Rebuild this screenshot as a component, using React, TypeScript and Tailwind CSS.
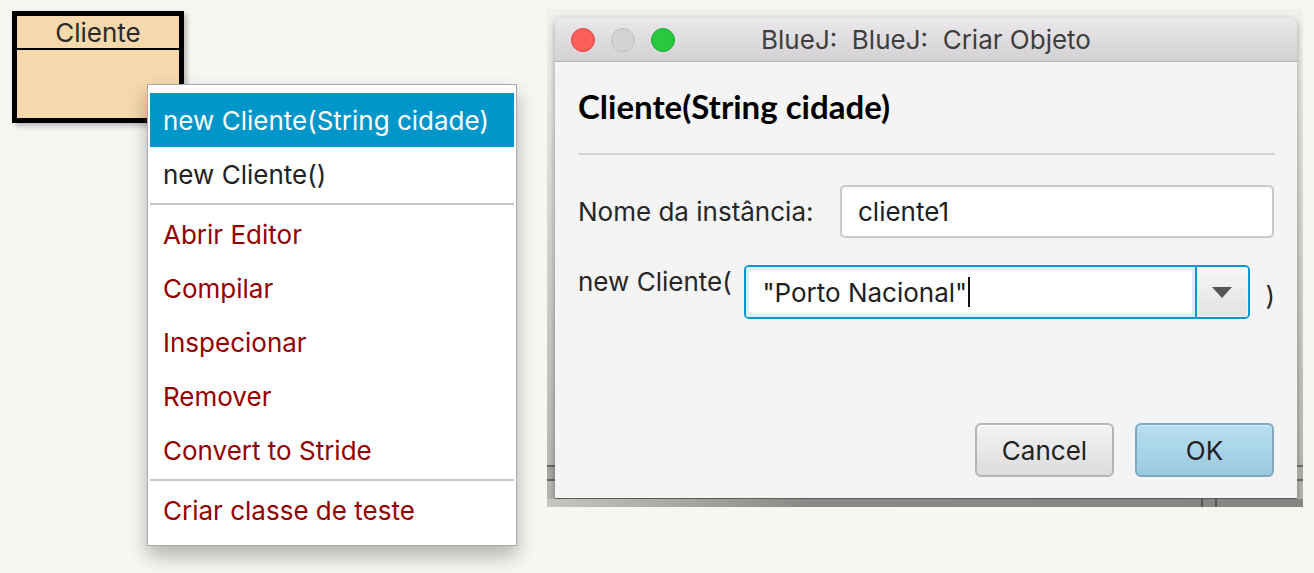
import React from "react";

const menuItems: { label: string; kind: "sel" | "normal" | "red" | "sep" }[] = [
  { label: "new Cliente(String cidade)", kind: "sel" },
  { label: "new Cliente()", kind: "normal" },
  { label: "", kind: "sep" },
  { label: "Abrir Editor", kind: "red" },
  { label: "Compilar", kind: "red" },
  { label: "Inspecionar", kind: "red" },
  { label: "Remover", kind: "red" },
  { label: "Convert to Stride", kind: "red" },
  { label: "", kind: "sep" },
  { label: "Criar classe de teste", kind: "red" },
];

function Menu() {
  return (
    <div className="absolute left-[147px] top-[84px] w-[370px] h-[462px] bg-white border border-[#a9a9a9] px-[2px] py-[8px] shadow-[0_10px_18px_rgba(0,0,0,0.28)] flex flex-col">
      {menuItems.map((it, i) =>
        it.kind === "sep" ? (
          <div key={i} className="h-[6px] flex items-center">
            <div className="h-[2px] w-full bg-[#c9c9c9]" />
          </div>
        ) : (
          <div
            key={i}
            className={
              it.kind === "sel"
                ? "h-[54px] pl-[13px] flex items-center text-[26px] text-white bg-[#0096c9]"
                : it.kind === "red"
                ? "h-[54px] pl-[13px] flex items-center text-[26px] text-[#930000]"
                : "h-[54px] pl-[13px] flex items-center text-[26px] text-[#222222]"
            }
          >
            {it.label}
          </div>
        )
      )}
    </div>
  );
}

function ClassBox() {
  return (
    <div className="ml-[12px] mt-[11px] w-[172px] h-[112px] border-[5px] border-black bg-[#f5d8ab] shadow-[3px_3px_5px_rgba(0,0,0,0.25)] flex flex-col shrink-0">
      <div className="h-[34px] pt-[2px] border-b-2 border-black flex items-center justify-center text-[26px] text-[#2a2a2a] leading-none">
        Cliente
      </div>
    </div>
  );
}

function Dialog() {
  return (
    <div className="ml-[363px] mt-[9px] w-[756px] h-[498px] shrink-0 flex flex-col bg-[linear-gradient(to_bottom,#f1f0ec,#d8d7d2_40%,#b4b3ae)]">
      <div className="flex pt-[9px]">
        {/* left strip */}
        <div className="w-[8px] h-[481px] flex flex-col">
          <div className="h-[447px]" />
          <div className="h-[2px] bg-[#666]" />
          <div className="h-[12px] bg-[#a8a7a4]" />
          <div className="h-[2px] bg-[#666]" />
        </div>
        {/* window */}
        <div className="w-[742px] h-[481px] flex flex-col rounded-t-[7px] overflow-hidden border-b border-[#5a5a5a] shadow-[0_2px_6px_rgba(0,0,0,0.35)]">
          <div className="h-[44px] shrink-0 grid grid-cols-[1fr_auto_1fr] items-center bg-[linear-gradient(to_bottom,#eae8ea,#d3d1d3)] border-b border-[#b3b1b3]">
            <div className="flex items-center gap-[16px] pl-[16px]">
              <div className="w-[24px] h-[24px] rounded-full bg-[#fc5f57] border border-[#e0443e]" />
              <div className="w-[24px] h-[24px] rounded-full bg-[#d3d3d3] border border-[#bdbdbd]" />
              <div className="w-[24px] h-[24px] rounded-full bg-[#28c840] border border-[#1eaa2d]" />
            </div>
            <div className="whitespace-pre text-[26px] text-[#3e3e3e] leading-none">BlueJ:  BlueJ:  Criar Objeto</div>
            <div />
          </div>
          <div className="flex-1 bg-[#f4f4f4] pl-[23px] pr-[22px] flex flex-col">
            <div className="mt-[26px] h-[36px] leading-[36px] text-[33px] font-bold text-black font-['Lato',sans-serif]">
              Cliente(String cidade)
            </div>
            <div className="mt-[29px] h-[2px] bg-[#d2d2d2]" />
            <div className="mt-[30px] flex items-center pr-[1px]">
              <div className="w-[262px] text-[26px] text-[#262626]">Nome da instância:</div>
              <div className="w-[434px] h-[53px] rounded-[5px] border-2 border-[#cacaca] bg-white flex items-center pl-[16px] text-[26px] text-[#1e1e1e] shadow-[inset_0_2px_2px_rgba(0,0,0,0.04)]">
                cliente1
              </div>
            </div>
            <div className="mt-[27px] flex items-start">
              <div className="w-[167px] pt-[2px] text-[26px] text-[#262626] leading-[30px]">new Cliente(</div>
              <div className="w-[507px] h-[54px] rounded-[5px] border-2 border-[#0a98cf] flex overflow-hidden">
                <div className="flex-1 flex items-center border-[3px] border-[#dbeff9] bg-white pl-[13px] text-[26px] text-[#1e1e1e]">
                  <span>"Porto Nacional"</span>
                  <span className="ml-[1px] w-[2px] h-[30px] bg-[#111]" />
                </div>
                <div className="w-[2px] bg-[#0a98cf]" />
                <div className="w-[51px] flex items-center justify-center bg-[linear-gradient(to_bottom,#f6f6f6,#e2e2e2)] border border-[#e8f4fa]">
                  <svg width="20" height="11" viewBox="0 0 20 11">
                    <path d="M0 0 L20 0 L10 11 Z" fill="#555" />
                  </svg>
                </div>
              </div>
              <div className="pl-[16px] pt-[16px] text-[26px] text-[#262626] leading-[30px]">)</div>
            </div>
            <div className="mt-[104px] flex justify-end gap-[21px] pr-[1px]">
              <div className="w-[139px] h-[54px] rounded-[6px] border-2 border-[#b5b5b5] bg-[linear-gradient(to_bottom,#f3f3f3,#dcdcdc)] shadow-[inset_0_1px_0_#ffffff] flex items-center justify-center text-[26px] text-[#222]">
                Cancel
              </div>
              <div className="w-[139px] h-[54px] rounded-[6px] border-2 border-[#80a9c0] bg-[linear-gradient(to_bottom,#b7def1,#9ccae0)] shadow-[inset_0_1px_0_#d4eefa] flex items-center justify-center text-[26px] text-[#222]">
                OK
              </div>
            </div>
          </div>
        </div>
        {/* right strip */}
        <div className="w-[6px] h-[481px] flex flex-col">
          <div className="h-[447px]" />
          <div className="h-[2px] bg-[#666]" />
          <div className="h-[12px] bg-[#a8a7a4]" />
          <div className="h-[2px] bg-[#666]" />
        </div>
      </div>
      <div className="h-[8px] flex bg-[linear-gradient(to_right,#c6c5c0,#8b8985_35%,#878581)]">
        <div className="w-[654px]" />
        <div className="w-[2px] bg-[#555]" />
        <div className="w-[12px]" />
        <div className="w-[2px] bg-[#555]" />
      </div>
    </div>
  );
}

export default function App() {
  return (
    <div className="relative w-[1314px] h-[573px] bg-[#f7f6f2] flex items-start overflow-hidden font-['Inter',sans-serif]">
      <ClassBox />
      <Dialog />
      <Menu />
    </div>
  );
}
